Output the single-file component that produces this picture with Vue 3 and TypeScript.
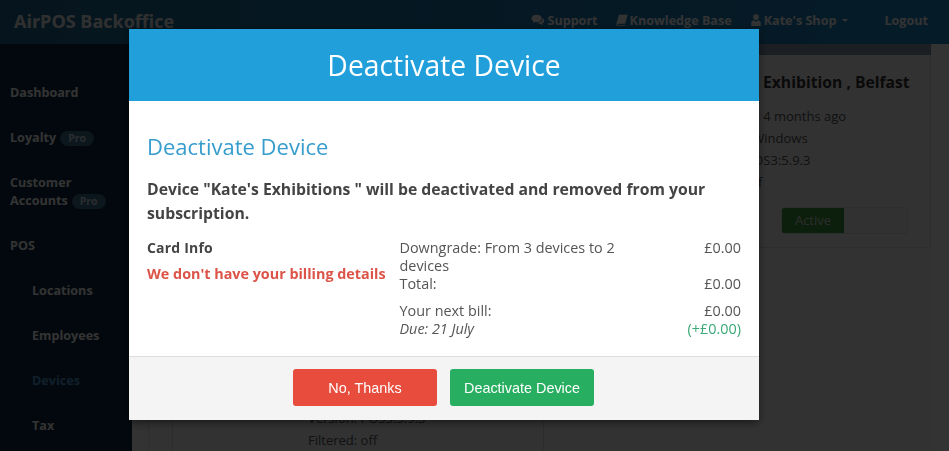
<template>
  <div class="page">
    <header class="topbar">
      <div class="brand">AirPOS Backoffice</div>
      <nav class="topnav">
        <a class="toplink">
          <svg class="ico chat" viewBox="0 0 16 14"><path d="M6.500 1C3 1 .5 2.900 .5 5.200c0 1.300 .8 2.500 2.100 3.300L2 10.500l2.500-1.200c.6 .1 1.300 .2 2 .2 3.400 0 6-1.900 6-4.300S9.900 1 6.500 1z" /><path d="M13.500 4.500c.1 .3 .1 .5 .1 .8 0 2.800-2.700 5-6.200 5.200 1 .9 2.300 1.300 3.700 1.300l2.400 1.200-.5-1.900c1.300-.7 2.200-1.800 2.200-3 0-1.500-.7-3-1.700-3.600z" /></svg>
          Support
        </a>
        <a class="toplink">
          <svg class="ico" viewBox="0 0 14 14"><path d="M3.500 1H13.500L10.800 11.300H2.500C1.800 11.300 1.500 11.800 1.700 12.300 1.800 12.700 2.200 13 2.800 13H11.300L10.900 14H2.500C1.200 14 .2 13 .3 11.700 .4 11.200 .5 10.800 .7 10.400z" /></svg>
          Knowledge Base
        </a>
        <a class="toplink">
          <svg class="ico" viewBox="0 0 12 14"><circle cx="6" cy="3.600" r="3.300" /><path d="M.5 14V10.500C.5 8.500 2 7.300 3.500 7.300L6 9 8.500 7.300C10 7.300 11.500 8.500 11.500 10.500V14z" /></svg>
          Kate's Shop
          <span class="caret"></span>
        </a>
        <a class="logout">Logout</a>
      </nav>
    </header>

    <div class="shell">
      <aside class="sidebar">
        <ul class="menu">
          <li v-for="item in menu" :key="item.label" :class="{ sub: item.sub, current: item.current }">
            {{ item.label }}<span v-if="item.pro" class="pro">Pro</span>
          </li>
        </ul>
      </aside>

      <main class="content">
        <div class="subbar"></div>
        <div class="panel">
          <div class="cards">
            <div class="card"></div>
            <section class="card right">
              <h3>Kate's Exhibition , Belfast</h3>
              <p>Last active: 4 months ago</p>
              <p>Platform: Windows</p>
              <p>Version: POS3:5.9.3</p>
              <p>Filtered: off</p>
              <div class="toggle"><span class="on">Active</span><span class="off"></span></div>
            </section>
            <section class="card low">
              <h3>Kate's Exhibitions</h3>
              <p>Last active: 4 months ago</p>
              <p>Platform: Windows</p>
              <p>Version: POS3:5.9.3</p>
              <p>Filtered: off</p>
            </section>
          </div>
        </div>
      </main>
    </div>

    <div class="overlay">
      <div class="modal">
        <div class="modal-head">Deactivate Device</div>
        <div class="modal-body">
          <h2>Deactivate Device</h2>
          <p class="lead">Device "Kate's Exhibitions " will be deactivated and removed from your subscription.</p>
          <div class="billing">
            <div class="card-info">
              <strong>Card Info</strong>
              <div class="warn">We don't have your billing details</div>
            </div>
            <div class="lines">
              <div class="line"><span>Downgrade: From 3 devices to 2 devices</span><span class="amt">£0.00</span></div>
              <div class="line"><span>Total:</span><span class="amt">£0.00</span></div>
              <div class="line next"><span>Your next bill:</span><span class="amt">£0.00</span></div>
              <div class="line"><em>Due: 21 July</em><span class="amt plus">(+£0.00)</span></div>
            </div>
          </div>
        </div>
        <div class="modal-foot">
          <button class="btn red">No, Thanks</button>
          <button class="btn green">Deactivate Device</button>
        </div>
      </div>
    </div>
  </div>
</template>

<script setup lang="ts">
interface MenuItem {
  label: string
  pro?: boolean
  sub?: boolean
  current?: boolean
}

const menu: MenuItem[] = [
  { label: 'Dashboard' },
  { label: 'Loyalty', pro: true },
  { label: 'Customer Accounts', pro: true },
  { label: 'POS' },
  { label: 'Locations', sub: true },
  { label: 'Employees', sub: true },
  { label: 'Devices', sub: true, current: true },
  { label: 'Tax', sub: true },
]
</script>

<style>
html, body {
  margin: 0;
  background: #ffffff;
  overflow: hidden;
}
</style>

<style scoped>
.page {
  width: 949px;
  height: 451px;
  overflow: hidden;
  font-family: "Open Sans", "Noto Sans", sans-serif;
  font-size: 14px;
  color: #333;
  background: #fff;
}

.topbar {
  height: 44px;
  display: flex;
  align-items: center;
  justify-content: space-between;
  padding: 0 0 0 14px;
  background: linear-gradient(90deg, #1f6a90, #1c78ab 50%, #1c89c8);
  box-sizing: border-box;
}
.brand {
  font-size: 18px;
  font-weight: 700;
  color: #f0f0f0;
  margin-top: -3px;
}
.topnav {
  display: flex;
  align-items: center;
  height: 100%;
  font-size: 12.6px;
  font-weight: 700;
  color: #fff;
}
.toplink {
  display: flex;
  align-items: center;
  gap: 2px;
  margin-right: 18px;
  margin-top: -4px;
}
.ico {
  width: 12px;
  height: 12px;
  fill: currentColor;
}
.chat {
  width: 14px;
}
.caret {
  border: 3px solid transparent;
  border-top-color: currentColor;
  border-bottom: 0;
  margin-left: 4px;
}
.logout {
  display: flex;
  align-items: center;
  height: 100%;
  padding: 0 21px 4px 17px;
  box-sizing: border-box;
  border-left: 1px solid #1f80b3;
}

.shell {
  display: flex;
  height: 407px;
}
.sidebar {
  width: 132px;
  flex: none;
  background: #0e2c42;
}
.menu {
  list-style: none;
  margin: 0;
  padding: 40px 0 0;
  font-size: 12.6px;
  font-weight: 700;
  line-height: 18px;
  color: #fff;
}
.menu li {
  padding: 0 10px;
  margin-bottom: 27px;
}
.menu li.sub {
  padding-left: 32px;
}
.menu li.current {
  color: #4f9bd8;
}
.pro {
  display: inline-block;
  margin-left: 4px;
  padding: 0 8px;
  height: 15px;
  line-height: 15px;
  border-radius: 8px;
  font-size: 10.5px;
  background: #3c6d91;
  color: #d0e0ea;
}

.content {
  flex: 1;
  display: flex;
  flex-direction: column;
  min-width: 0;
}
.subbar {
  height: 11px;
  margin-right: 18px;
  background: #8596ac;
  flex: none;
}
.panel {
  flex: 1;
  margin-left: 16px;
  margin-right: 18px;
  border-left: 1px solid #e4e4e4;
  padding-left: 23px;
  background: #fbfbfb;
  min-height: 0;
}
.cards {
  display: grid;
  grid-template-columns: 372px 387px;
  grid-template-rows: 193px;
  row-gap: 64px;
}
.card {
  background: #fbfbfb;
  border: 1px solid #dedede;
  border-top: 0;
  padding: 14px 22px 0 135px;
  box-sizing: border-box;
}
.card.right {
  border-left: 0;
  padding-left: 149px;
}
.card.right h3 {
  margin-left: 18px;
}
.card.low {
  grid-column: 1;
  border-top: 1px solid #dedede;
  height: 200px;
}
.card h3 {
  margin: 0 0 10px;
  font-size: 15.7px;
  line-height: 26px;
  font-weight: 700;
  color: #333;
  white-space: nowrap;
}
.card p {
  margin: 0;
  line-height: 22px;
  font-size: 13px;
  color: #555;
  white-space: nowrap;
}
.toggle {
  display: flex;
  width: 127px;
  height: 27px;
  margin: 14px 0 0 auto;
  border: 1px solid #e2e2e2;
  border-radius: 3px;
  box-sizing: border-box;
  overflow: hidden;
  font-size: 13px;
}
.on {
  width: 62px;
  line-height: 25px;
  text-align: center;
  background: #3c9c3c;
  color: #dcdcdc;
}
.off {
  flex: 1;
  background: #f2f2f2;
}

.overlay {
  position: fixed;
  inset: 0;
  background: rgba(0, 0, 0, 0.8);
  padding: 29px 0 0 129px;
  box-sizing: border-box;
}
.modal {
  width: 630px;
  height: 391px;
  display: flex;
  flex-direction: column;
  background: #fff;
  box-shadow: 0 3px 9px rgba(0, 0, 0, 0.5);
}
.modal-head {
  height: 72px;
  flex: none;
  display: flex;
  align-items: center;
  justify-content: center;
  background: #219fdb;
  color: #fff;
  font-size: 28.3px;
}
.modal-body {
  flex: 1;
  padding: 0 18px;
  min-height: 0;
}
.modal-body h2 {
  margin: 30px 0 0;
  font-size: 22px;
  font-weight: 400;
  line-height: 30px;
  color: #379dcd;
}
.lead {
  margin: 16px 0 0;
  font-size: 15.75px;
  font-weight: 700;
  line-height: 24px;
  color: #444;
}
.billing {
  display: flex;
  margin-top: 14px;
}
.card-info {
  width: 252.500px;
  flex: none;
  color: #444;
  line-height: 18px;
}
.card-info strong {
  display: block;
  letter-spacing: 0.2px;
}
.warn {
  margin-top: 8px;
  font-size: 14.35px;
  font-weight: 700;
  color: #dc5347;
  white-space: nowrap;
}
.lines {
  flex: 1;
  font-size: 14.4px;
  color: #555;
  line-height: 18px;
}
.line {
  display: flex;
  justify-content: space-between;
  gap: 60px;
}
.line.next {
  margin-top: 9px;
}
.amt {
  white-space: nowrap;
}
.plus {
  color: #3ba877;
}

.modal-foot {
  height: 64px;
  flex: none;
  box-sizing: border-box;
  border-top: 1px solid #ddd;
  background: #f4f4f4;
  display: flex;
  justify-content: center;
  align-items: flex-start;
  gap: 13px;
  padding: 12px 1px 0 0;
}
.btn {
  width: 144px;
  height: 37px;
  padding: 0;
  border: 0;
  border-radius: 3px;
  font-family: "Liberation Sans", Arial, sans-serif;
  font-size: 14.4px;
  color: #fff;
}
.red {
  background: #e74c3c;
}
.green {
  background: #27ae60;
}
</style>
